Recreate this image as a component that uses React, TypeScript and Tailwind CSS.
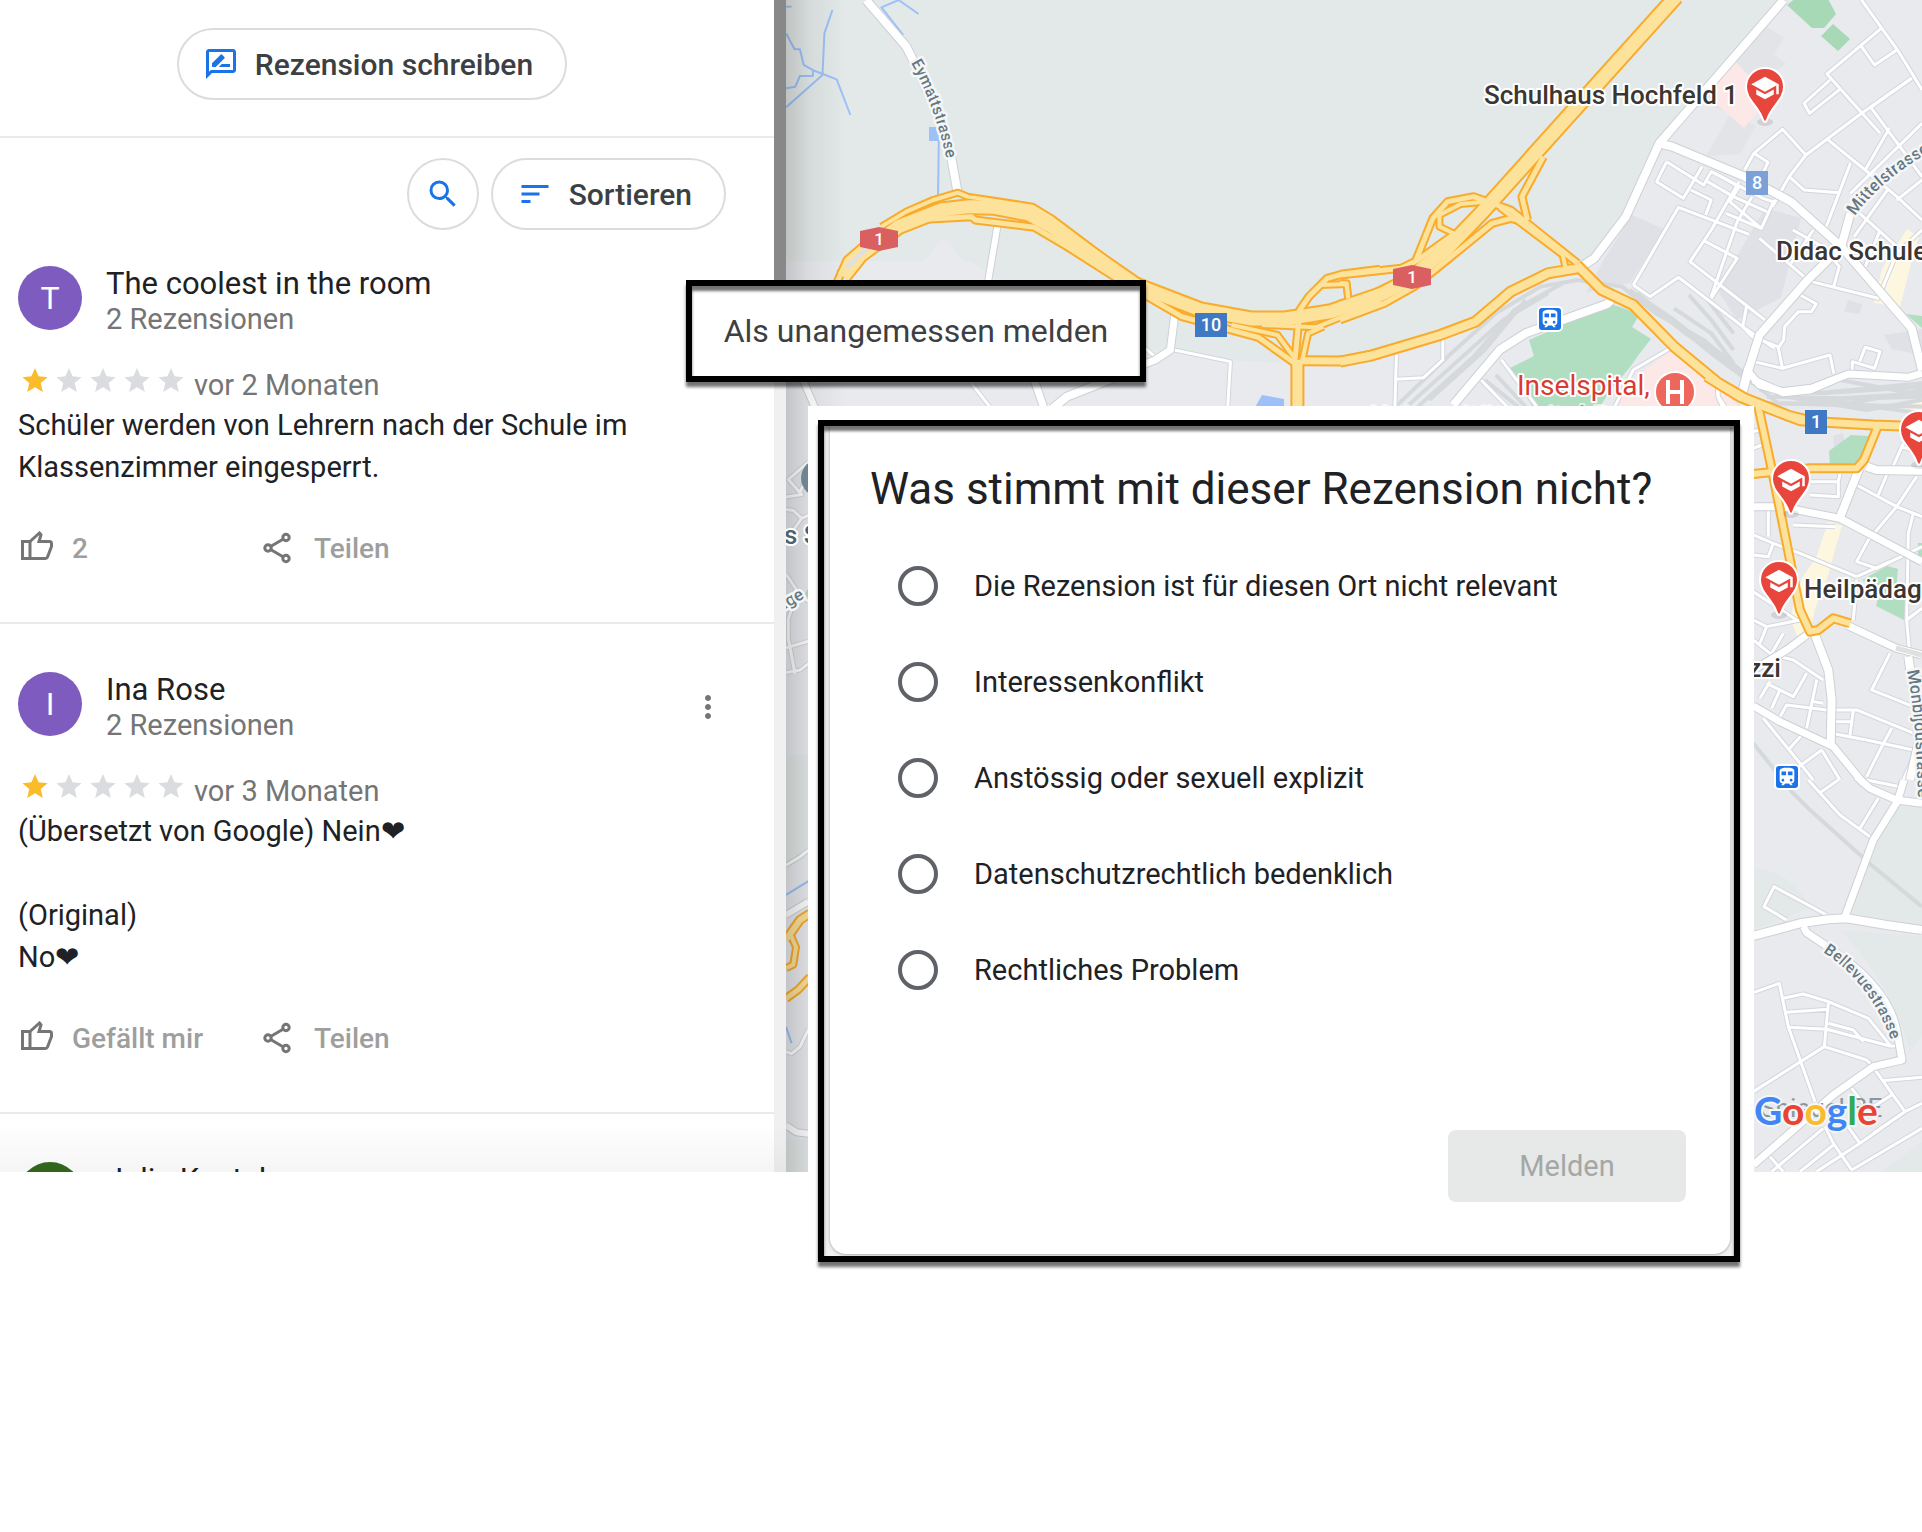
import { useState } from 'react';
import { MdMoreVert, MdOutlineRateReview, MdSchool, MdSearch, MdSort, MdTrain } from 'react-icons/md';

type Review = {
  author: string;
  initial: string;
  color: string;
  count?: string;
  rating?: number;
  age?: string;
  lines?: string[];
  likes?: string;
  menu?: boolean;
};

const REVIEWS: Review[] = [
  {
    author: 'The coolest in the room',
    initial: 'T',
    color: 'bg-[#7e5bbe]',
    count: '2 Rezensionen',
    rating: 1,
    age: 'vor 2 Monaten',
    lines: ['Schüler werden von Lehrern nach der Schule im', 'Klassenzimmer eingesperrt.'],
    likes: '2',
  },
  {
    author: 'Ina Rose',
    initial: 'I',
    color: 'bg-[#7e5bbe]',
    count: '2 Rezensionen',
    rating: 1,
    age: 'vor 3 Monaten',
    lines: ['(Übersetzt von Google) Nein❤', '', '(Original)', 'No❤'],
    likes: 'Gefällt mir',
    menu: true,
  },
  { author: 'Julia Kastel', initial: '', color: 'bg-[#33691e]' },
];

const REASONS = [
  'Die Rezension ist für diesen Ort nicht relevant',
  'Interessenkonflikt',
  'Anstössig oder sexuell explizit',
  'Datenschutzrechtlich bedenklich',
  'Rechtliches Problem',
];

function ThumbIcon() {
  return (
    <svg viewBox="0 3 36 36" className="size-9 shrink-0" fill="none" stroke="#757575" strokeWidth="3">
      <path d="M4.5 13.5H12v17H4.5z" />
      <path d="M12 13.5 21.5 5l1.5 1.8-2 6.7h10.5q2 0 2 2v3l-4 10.5q-.6 1.500-2 1.500H12" />
    </svg>
  );
}

function ShareIcon() {
  return (
    <svg viewBox="0 3 36 36" className="size-9 shrink-0" fill="none" stroke="#757575" strokeWidth="3">
      <circle cx="8" cy="20" r="3.200" />
      <circle cx="26" cy="9.500" r="3.200" />
      <circle cx="26" cy="30.500" r="3.200" />
      <path d="M11 18.300 23 11.200M11 21.700l12 7.100" />
    </svg>
  );
}

function Stars({ rating }: { rating: number }) {
  return (
    <div className="flex gap-2 pb-[10px] pl-1" role="img" aria-label={`${rating} von 5 Sternen`}>
      {[1, 2, 3, 4, 5].map((n) => (
        <svg
          key={n}
          viewBox="2 2 20 19"
          className={n <= rating ? 'h-6 w-[26px] fill-[#fbbc2c]' : 'h-6 w-[26px] fill-[#dadce0]'}
        >
          <path d="M12 17.270 18.180 21l-1.640-7.030L22 9.240l-7.190-.61L12 2 9.190 8.630 2 9.240l5.460 4.730L5.820 21z" />
        </svg>
      ))}
    </div>
  );
}

function ReviewItem({ review }: { review: Review }) {
  return (
    <article className="border-b-2 border-[#e8eaed] px-[18px] pt-12 pb-[54px]">
      <header className="flex">
        <div
          className={`flex size-16 items-center justify-center rounded-full text-[32px] leading-9 text-white ${review.color}`}
        >
          {review.initial}
        </div>
        <div className="ml-6">
          <h2 className="text-[31px] leading-9 text-[#202124]">{review.author}</h2>
          {review.count && <p className="text-[29px] leading-[34px] text-[#757575]">{review.count}</p>}
        </div>
        {review.menu && (
          <button type="button" aria-label="Weitere Aktionen" className="mr-[30px] ml-auto text-[#757575]">
            <MdMoreVert className="size-9" />
          </button>
        )}
      </header>
      {review.rating && (
        <div className="mt-[30px] flex h-[38px] items-center gap-[10px]">
          <Stars rating={review.rating} />
          <span className="text-[29px] leading-[34px] text-[#757575]">{review.age}</span>
        </div>
      )}
      {review.lines && (
        <div className="text-[29px] leading-[42px] text-[#202124]">
          {review.lines.map((line, i) => (
            <p key={i} className="min-h-[42px]">
              {line}
            </p>
          ))}
        </div>
      )}
      {review.likes && (
        <footer className="mt-[42px] flex text-[28px] leading-[38px] font-medium text-[#9e9e9e]">
          <button type="button" className="flex w-[242px] items-center gap-[18px]">
            <ThumbIcon />
            {review.likes}
          </button>
          <button type="button" className="flex items-center gap-[18px]">
            <ShareIcon />
            Teilen
          </button>
        </footer>
      )}
    </article>
  );
}

function ReviewPanel() {
  return (
    <section className="relative flex w-[786px] shrink-0 overflow-hidden">
      <div className="flex-1">
        <div className="flex h-[138px] justify-center border-b-2 border-[#e8eaed] pt-7 pr-[30px]">
          <button
            type="button"
            className="flex h-[72px] items-center gap-4 rounded-full border-2 border-[#dadce0] pr-8 pl-6 text-[30px] font-medium text-[#3c4043]"
          >
            <MdOutlineRateReview className="size-9 text-[#1a73e8]" />
            Rezension schreiben
          </button>
        </div>
        <div className="flex h-20 justify-end gap-3 pt-5 pr-12">
          <button
            type="button"
            aria-label="Rezensionen suchen"
            className="flex size-[72px] items-center justify-center rounded-full border-2 border-[#dadce0]"
          >
            <MdSearch className="size-9 text-[#1a73e8]" />
          </button>
          <button
            type="button"
            className="flex h-[72px] items-center gap-4 rounded-full border-2 border-[#dadce0] pr-8 pl-6 text-[30px] font-medium text-[#3c4043]"
          >
            <MdSort className="size-9 text-[#1a73e8]" />
            Sortieren
          </button>
        </div>
        {REVIEWS.map((review) => (
          <ReviewItem key={review.author} review={review} />
        ))}
      </div>
      <div className="w-3 bg-[#f0f0f0]">
        <div className="h-[330px] bg-[#888888]" />
      </div>
      <div className="pointer-events-none absolute inset-x-0 bottom-0 h-12 bg-linear-to-b from-transparent to-black/4" />
    </section>
  );
}

type Road = { d: string; w: number };

type Tile = {
  transform: string;
  water?: string[];
  rails?: string[];
  lanes?: string[];
  streets?: Road[];
  highways?: Road[];
};

const TILES: Tile[] = [
  {
    transform: 'matrix(.3827 0 0 .3333 780 0)',
    water: [
      'M16 20H30',
      'M137 30 116 100 111 225 16 322',
      'M16 100 38 148H52L62 195 85 210 148 238 184 345',
      'M86 212V228H52L40 260 16 265',
      'M362 42 310 0 265 22 322 105',
      'M415 420 413 585',
    ],
    lanes: ['M500 1150 548 1220', 'M1030 1050 1177 1085 1170 1220', 'M950 1040 985 1075'],
    streets: [
      { d: 'M225 0 330 140 352 190Q430 380 447 470L466 590', w: 8 },
      { d: 'M570 665 543 850', w: 6 },
      { d: 'M1032 940 1020 1050 980 1080 940 1098', w: 7 },
      { d: 'M60 1140 92 1225', w: 6 },
      { d: 'M664 1140 690 1225', w: 7 },
      { d: 'M870 1135 750 1190 712 1225', w: 8 },
    ],
    highways: [
      { d: 'M265 680 330 635 400 600 465 578 490 590 660 620 710 655 930 845', w: 4 },
      { d: 'M148 850 175 780 225 730', w: 5 },
      { d: 'M380 658 500 650 510 660 665 682 750 740 900 850 1050 950 1250 1012 1345 1090', w: 5 },
      { d: 'M1180 975 1300 1005 1345 1075', w: 4 },
      { d: 'M1260 975 1400 982 1568 905', w: 4 },
      { d: 'M1345 1090 1358 930 1382 890 1430 835 1470 822 1568 808', w: 5 },
      { d: 'M1365 1080 1380 1000 1420 980', w: 4 },
      { d: 'M1410 855 1480 852 1485 895', w: 4 },
      { d: 'M1360 1082 1475 1083 1568 1060', w: 7 },
      { d: 'M1352 1080V1240', w: 10 },
      {
        d: 'M165 830 210 765 310 680 420 630 495 620 560 622 650 642 710 680 930 855 1100 930 1230 957 1320 957 1440 935 1568 885',
        w: 13,
      },
    ],
  },
  {
    transform: 'matrix(.3712 0 0 .3333 1340 0)',
    rails: [
      'M150 1220 300 1060 420 940 540 860 640 840 760 860 850 940 980 1020 1100 1130 1240 1200 1568 1190',
      'M180 1220 330 1070 440 960 560 880',
      'M210 1220 360 1070 470 930 600 850',
      'M240 1200 390 1050 500 900',
      'M780 870 900 960 1060 1100 1180 1210 1568 1220',
      'M800 880 1000 1060 1110 1150',
      'M830 910 930 1000 1050 1080',
      'M900 925 1000 1000 1060 1090',
      'M940 885 1000 960 1060 1050',
      'M990 900 1060 1000',
      'M1130 1170 1300 1180 1568 1160',
      'M1150 1190 1350 1195 1568 1180',
      'M1150 1210 1400 1215 1568 1240',
      'M390 1140 480 1220',
      'M420 1125 500 1220',
    ],
    lanes: [
      'M790 855 912 622 1102 703',
      'M880 485 980 555 1000 515 1140 595 1165 605',
      'M880 485 853 545 925 595 975 500',
      'M945 570 1000 600 985 645',
      'M1075 545 1000 690 943 785 1145 960',
      'M1110 590 1070 665 1000 890',
      'M990 545 1060 590 1150 635',
      'M1050 605 1135 685 1170 600',
      'M1040 640 1135 685',
      'M980 722 1070 775 1000 895',
      'M1010 520 1075 560 1050 605',
      'M790 855 835 890 912 832 1085 980 1170 1045',
      'M1095 920 1085 980 1110 1010 1180 1040 1192 1105',
      'M1090 510 1115 460 1192 388 1255 465 1210 530 1165 620',
      'M1115 460 1153 487 1130 540',
      'M1255 465 1405 340 1540 235',
      'M1210 530 1250 570 1345 578',
      'M1405 0 1505 155 1568 270',
      'M1458 85 1312 222 1455 400',
      'M1405 140 1440 195 1500 150',
      'M1350 265 1265 340 1250 310 1320 240',
      'M1540 235 1430 322 1568 530',
      'M1568 370 1375 580',
      'M1480 385 1415 510',
      'M1315 420 1415 510 1500 590 1568 660',
      'M1375 490 1310 680',
      'M1400 640 1500 740',
      'M1475 570 1385 710',
      'M1455 690 1415 800',
      'M1130 715 1250 830',
      'M1220 690 1300 740 1345 800 1330 860',
      'M1275 690 1215 790',
      'M1270 845 1450 895 1500 760 1568 690',
      'M1240 885 1283 912 1270 935 1235 935 1198 980 1195 1020 1180 1045',
      'M1115 1085 1192 1105 1320 1065 1330 1120',
      'M1380 1110V1085L1440 1105 1455 1055 1415 1042 1400 1085',
      'M1500 600 1568 540',
      'M277 1015V1080L225 1133 150 1138 148 1220',
      'M152 1065 150 1138',
      'M435 1080 530 1220',
      'M890 1045 790 1110 740 1220',
      'M1018 1155V1190L1030 1220',
      'M380 1140 450 1220',
    ],
    streets: [
      { d: 'M1195 0 860 430 770 650 685 775 650 800', w: 8 },
      { d: 'M860 430 895 440 1090 530 1215 605 1350 740 1540 985 1568 1110', w: 8 },
      { d: 'M1375 640 1350 740 1260 840 1130 1005 1100 1110 1080 1200', w: 8 },
      { d: 'M1100 1115 1130 1155 1190 1175 1270 1165 1370 1122 1530 1132 1568 1120', w: 7 },
      { d: 'M740 890 720 912 500 1000 430 1050 305 1215', w: 8 },
    ],
    highways: [
      { d: 'M0 825 165 805 210 780 310 700', w: 5 },
      { d: 'M205 780 250 655 290 605 360 590 460 630 505 670 640 790', w: 5 },
      { d: 'M305 700 268 680V645L325 612 390 605', w: 4 },
      { d: 'M0 960 120 910 200 860 300 770 410 670 460 655 505 668', w: 5 },
      { d: 'M548 470 490 590 505 660', w: 5 },
      { d: 'M430 622 600 765 607 800', w: 4 },
      { d: 'M0 850H18L22 895', w: 4 },
      { d: 'M0 1085 80 1068 270 1005 365 965 460 875 560 820 640 805', w: 8 },
      { d: 'M905 -10 380 640 285 750 170 850 80 900 0 925', w: 13 },
      { d: 'M638 795 705 870 790 915 900 1040 1020 1150 1090 1195 1210 1248 1260 1262', w: 8 },
    ],
  },
  {
    transform: 'matrix(.3333 0 0 .3333 1700 380)',
    rails: ['M350 40 666 10', 'M300 60 450 70 666 30', 'M260 50 500 90 666 60', 'M420 0 666 45', 'M160 1090 240 1190'],
    lanes: [
      'M50 0 55 50 75 80',
      'M160 155 180 150M160 205 185 195',
      'M205 390V470',
      'M330 305 415 305 420 280M415 305V350L330 345',
      'M280 435 405 440',
      'M160 465 220 490 300 520 470 590',
      'M220 490 205 530 160 525',
      'M470 315 590 380 666 410',
      'M560 285 535 345M610 190 570 280M600 200 640 210',
      'M650 290 590 380 505 480 470 545 530 565 666 500',
      'M640 400 625 460 620 720 630 830',
      'M470 590 570 545M470 600 460 720M620 720 666 685',
      'M160 720 200 740 300 720M160 780 210 820 240 850M200 740 180 790M250 760 215 820',
      'M160 635 290 720',
      'M240 830 280 840 370 900M320 880 280 950 200 910M240 930 215 985M210 905 180 955',
      'M240 1010 260 975 380 990 470 990 666 1070',
      'M350 900 320 1045M460 990 450 1065M400 1025H460',
      'M395 1060 500 1080 640 1110M575 1045 540 1110 500 1190M340 965 370 970',
      'M570 820 515 930 640 980',
      'M190 1015 300 1150 340 1200M310 1060 265 1110M365 1110 290 1165M365 1110 420 1200M650 1110 610 1200',
    ],
    streets: [
      { d: 'M145 -40 120 55', w: 7 },
      { d: 'M160 0 250 38 330 30 400 0', w: 7 },
      { d: 'M500 260 530 270 666 272', w: 8 },
      { d: 'M160 380H240L420 415 666 545', w: 7 },
      { d: 'M478 265 420 412', w: 8 },
      { d: 'M345 765 385 870 395 960 392 1095', w: 8 },
      { d: 'M320 765 260 810 160 870', w: 7 },
      { d: 'M160 978 240 1025 400 1100 490 1210', w: 7 },
      { d: 'M440 735 590 805 666 825', w: 7 },
      { d: 'M625 830 650 1000 655 1090 630 1200', w: 8 },
    ],
    highways: [
      { d: 'M160 282 330 265 470 265 492 240 532 142', w: 6 },
      { d: 'M175 80 220 290 300 690 330 755 355 750 400 715 450 730', w: 6 },
      { d: 'M20 -10 120 52 300 122 520 135 666 140', w: 7 },
    ],
  },
  {
    transform: 'matrix(.3333 0 0 .3333 1700 780)',
    rails: ['M270 30 330 90 520 260 666 380'],
    lanes: [
      'M325 0 420 105 510 170M360 38 415 0M535 55 480 145M500 0 600 20',
      'M380 405 222 320 192 380 260 420',
      'M160 638 238 610 265 740 345 965',
      'M250 655 310 642 385 665 505 715 570 795M385 670 373 800 160 935M260 697 385 688M268 742 380 748 570 798 585 798M385 730 460 750 490 785',
      'M373 800 500 840 515 855M525 870 615 995 520 1060M545 902 666 892M575 945 520 980',
      'M455 925 490 970M666 970 615 995 480 1090 350 1175M440 1035 480 1090M666 1045 455 1170',
      'M375 1040 400 1090 455 1170M370 1045 215 1175M400 1095 300 1175M210 1130 250 1175',
    ],
    streets: [
      { d: 'M470 -10 510 25 590 60 666 70', w: 7 },
      { d: 'M612 0 592 65 520 180 435 410', w: 7 },
      { d: 'M160 468 300 430 385 418 440 415 560 435 666 450', w: 8 },
      { d: 'M310 440 320 458 375 495Q570 620 592 760L606 840 520 860 400 945 160 1155', w: 7 },
    ],
  },
  {
    transform: 'matrix(.3333 0 0 .4975 770 400)',
    water: ['M48 995 115 967', 'M48 1260 65 1293'],
    lanes: [
      'M115 125 55 160 95 190 48 195M90 185 115 150',
      'M48 220 70 222 95 238 115 232M95 238 70 262',
      'M48 350 83 385 115 405M83 385 55 440V480L75 550M48 498 115 485M48 548 90 543 115 530',
      'M48 1310 65 1314 90 1300 115 1265',
    ],
    streets: [
      { d: 'M48 935 90 918 115 905', w: 3 },
      { d: 'M48 1035 115 1008', w: 6 },
      { d: 'M48 1458 80 1472 115 1475', w: 6 },
    ],
    highways: [
      { d: 'M48 1085 90 1045 120 1032', w: 6 },
      { d: 'M62 1075 78 1100 70 1135 48 1142', w: 4 },
      { d: 'M48 1203 85 1185 120 1160', w: 5 },
    ],
  },
];

function RoadLayer({ kind, color, extra }: { kind: 'streets' | 'highways'; color: string; extra: number }) {
  return (
    <g stroke={color} strokeLinejoin="round">
      {TILES.map((tile) => (
        <g key={tile.transform} transform={tile.transform}>
          {(tile[kind] ?? []).map((road) => (
            <path key={road.d} d={road.d} strokeWidth={road.w + extra} vectorEffect="non-scaling-stroke" />
          ))}
        </g>
      ))}
    </g>
  );
}

function LineLayer({ kind, color, width }: { kind: 'water' | 'rails' | 'lanes'; color: string; width: number }) {
  return (
    <g stroke={color} strokeWidth={width} strokeLinejoin="round">
      {TILES.map((tile) => (
        <g key={tile.transform} transform={tile.transform}>
          {(tile[kind] ?? []).map((d) => (
            <path key={d} d={d} vectorEffect="non-scaling-stroke" />
          ))}
        </g>
      ))}
    </g>
  );
}

function Pin({ x, y }: { x: number; y: number }) {
  return (
    <g transform={`translate(${x} ${y})`}>
      <ellipse cx="0" cy="54" rx="8" ry="4" fill="#000" opacity=".1" />
      <path
        d="M0 0C11 0 19 8.500 19 19c0 13-13 19-17 33q-2 4-4 0C-6 38-19 32-19 19-19 8.500-11 0 0 0z"
        fill="#e8453c"
        stroke="#fff"
        strokeWidth="2"
      />
      <MdSchool x={-15} y={5} size={30} color="#fff" />
    </g>
  );
}

function Station({ x, y }: { x: number; y: number }) {
  return (
    <g transform={`translate(${x} ${y})`}>
      <rect x="-12" y="-12" width="24" height="24" rx="4" fill="#1a73e8" stroke="#fff" strokeWidth="2" />
      <MdTrain x={-11} y={-11} size={22} color="#fff" />
    </g>
  );
}

function Shield({ x, y, label, fill }: { x: number; y: number; label: string; fill: string }) {
  const half = label.length > 1 ? 16 : 11;
  return (
    <g transform={`translate(${x} ${y})`}>
      <rect x={-half} y="-12" width={half * 2} height="24" fill={fill} />
      <text y="6" textAnchor="middle" fontSize="18" fontWeight="500" fill="#fff">
        {label}
      </text>
    </g>
  );
}

function MotorwayShield({ x, y }: { x: number; y: number }) {
  return (
    <g transform={`translate(${x} ${y})`}>
      <path d="M-19-8 0-12 19-8V8L0 12-19 8z" fill="#da5f60" />
      <text y="6" textAnchor="middle" fontSize="17" fontWeight="500" fill="#fff">
        1
      </text>
    </g>
  );
}

function MapView() {
  return (
    <svg
      viewBox="786 0 1136 1172"
      preserveAspectRatio="xMinYMin slice"
      className="h-full w-full"
      fill="none"
      role="img"
      aria-label="Karte"
    >
      <defs>
        <linearGradient id="edge" x1="0" x2="1" y1="0" y2="0">
          <stop offset="0" stopColor="#000" stopOpacity=".16" />
          <stop offset=".4" stopColor="#000" stopOpacity=".06" />
          <stop offset="1" stopColor="#000" stopOpacity="0" />
        </linearGradient>
        <path id="eymatt" d="M911 63Q937 108 951 180" />
        <path id="mittel" d="M1855 216Q1880 180 1935 149" />
        <path id="monbijou" d="M1907 671Q1917 720 1918 810" />
        <path id="bellevue" d="M1823 952Q1876 986 1898 1060" />
        <path id="koeniz" d="M780 612 822 588" />
      </defs>

      <path d="M786 0h1136v1172H786z" fill="#e8eaee" />

      {/* woodland and open country */}
      <g fill="#e3e9e8">
        <path d="M786 0h1000l-127 145-34 72-35 48-16 4-60 24-38 32-136 40-100-4-150-20-120-80H786z" />
        <path d="m944 238 36 42h-74z" fill="#e8eaee" />
        <path d="M786 755h22v95l-22 22zM786 1140h22v32h-22z" />
        <path d="M1898 806h24v124l-78-6 26-80zM1840 930l82 6v100l-12 15q-20-70-70-121zM1754 868q40 4 56 40l-56 22zM1880 1172l42-30v30z" />
      </g>
      <g fill="#e0e1e6">
        <path d="m1766 26 18 12-10 16 12 10-44 30-36 62 34-2 16-28-60-28z" opacity=".7" />
        <path d="m1632 215 32 14-34 54-44 10 18-34zM1765 208l36 10-20 80-44 22-20-30z" />
        <path d="m1848 300 14 4-2 10-16-2zM1884 335l38-6v26l-30-6zM1833 436l10-3 2 12-11 2z" />
      </g>
      <g fill="#a8d9b7">
        <path d="m1787 5 10-8h30l9 17-12 14h-12zM1833 24l17 15-12 12-17-15z" />
      </g>
      <g fill="#b1ddc0">
        <path d="m1611 304 29 10-8 13 19 12-11 14-10 14-20 24-13 20h-62l-25-43 24-12-5-16z" />
        <path d="m1829 451 22-16 19 1-9 27-31 2zM1862 580l25-14 11 3-2 22 10 6-2 23-28-14 4-16zM1906 314l16 2v12zM1918 543h4v16h-4zM803 597h5v-8z" />
      </g>
      <g fill="#fce8e6">
        <path d="m1736 62 34 36-26 30-28-24-4-24zM1672 349l60 50 22 30v-18h-140l14-28z" />
      </g>
      <g fill="#fef7e0">
        <path d="m1907 229 12 8-5 14-14 56-26-4 8-34zM1828 522l14 4-6 20-8 30-12 30-6 24-12 8-8-20 12-40 14-20zM1900 404l22-4v12h-20z" />
      </g>
      <g fill="#9dc0f9">
        <path d="M929 127h10v14h-10zM1262 395l22 4v10h-30z" />
      </g>

      <LineLayer kind="water" color="#9dc0f9" width={2} />
      <LineLayer kind="rails" color="#d5d9dc" width={4} />
      <LineLayer kind="lanes" color="#d3d6db" width={5} />
      <LineLayer kind="lanes" color="#ffffff" width={3} />
      <RoadLayer kind="streets" color="#cdd0d5" extra={2} />
      <RoadLayer kind="streets" color="#ffffff" extra={0} />
      <RoadLayer kind="highways" color="#f9ab2b" extra={4} />
      <RoadLayer kind="highways" color="#fde29b" extra={0} />
      <path d="M846 268 878 238M1896 648 1922 655" stroke="#e0e0e0" strokeWidth="5" />

      <rect x="786" width="60" height="1172" fill="url(#edge)" />

      <MotorwayShield x={879} y={239} />
      <MotorwayShield x={1412} y={277} />
      <Shield x={1211} y={325} label="10" fill="#3f79c4" />
      <Shield x={1757} y={183} label="8" fill="#7ba1d8" />
      <Shield x={1816} y={422} label="1" fill="#3f79c4" />
      <Station x={1550} y={319} />
      <Station x={1787} y={777} />

      <g
        fontSize="17"
        fontWeight="500"
        fill="#67777f"
        stroke="#f4f6f7"
        strokeWidth="5"
        strokeLinejoin="round"
        paintOrder="stroke"
      >
        <text fontSize="16">
          <textPath href="#eymatt">Eymattstrasse</textPath>
        </text>
        <text>
          <textPath href="#mittel">Mittelstrasse</textPath>
        </text>
        <text>
          <textPath href="#monbijou">Monbijoustrasse</textPath>
        </text>
        <text fontSize="16">
          <textPath href="#bellevue">Bellevuestrasse</textPath>
        </text>
        <text>
          <textPath href="#koeniz">tige</textPath>
        </text>
      </g>

      <circle cx="820" cy="478" r="19" fill="#6d8591" />

      <g fontSize="26" fontWeight="500" stroke="#fff" strokeWidth="4" strokeLinejoin="round" paintOrder="stroke">
        <g fill="#3c3633">
          <text x="1484" y="104">
            Schulhaus Hochfeld 1
          </text>
          <text x="1776" y="260">
            Didac Schule
          </text>
          <text x="1804" y="598">
            Heilpädag
          </text>
          <text x="1781" y="677" textAnchor="end">
            zzi
          </text>
        </g>
        <g fill="#d93a33" fontSize="28" fontWeight="400">
          <text x="1370" y="426" opacity=".6">
            Universitätsspital Bern
          </text>
          <text x="1517" y="395">
            Inselspital,
          </text>
        </g>
        <text x="784" y="544" fill="#4b626c">
          s S
        </text>
      </g>

      <circle cx="1675" cy="392" r="20" fill="#ee675c" stroke="#fff" strokeWidth="2" />
      <path d="M1668 380v24M1682 380v24M1668 392h14" stroke="#fff" strokeWidth="4" />

      <Pin x={1765} y={68} />
      <Pin x={1919} y={411} />
      <Pin x={1791} y={460} />
      <Pin x={1779} y={561} />

      <text x="1760" y="1117" fontSize="26" fill="#8b979d">
        Spiegel BE
      </text>
      <text
        x="1754"
        y="1125"
        fontSize="39"
        fontWeight="700"
        fontFamily="Lato, sans-serif"
        stroke="#f4f6f7"
        strokeWidth="4"
        paintOrder="stroke"
      >
        <tspan fill="#4285f4">G</tspan>
        <tspan fill="#ea4335">o</tspan>
        <tspan fill="#fbbc2c">o</tspan>
        <tspan fill="#4285f4">g</tspan>
        <tspan fill="#34a853">l</tspan>
        <tspan fill="#ea4335">e</tspan>
      </text>
    </svg>
  );
}

function ReportDialog() {
  const [reason, setReason] = useState<string | null>(null);

  return (
    <div className="absolute top-[406px] left-[808px] w-[946px] bg-white pt-[14px] pr-[14px] pb-5 pl-[10px]">
      <div className="relative border-[6px] border-black bg-[#f0f0f0] pr-1 pl-[6px] shadow-[0_5px_3px_rgba(0,0,0,0.55)]">
        <form
          role="dialog"
          aria-labelledby="report-title"
          onSubmit={(e) => e.preventDefault()}
          className="mb-[2px] flex flex-col rounded-b-2xl bg-white pt-[35px] pr-11 pb-[52px] pl-10 shadow-[0_1px_3px_rgba(60,64,67,0.4)]"
        >
          <h1 id="report-title" className="text-[44px] leading-[56px] text-[#202124]">
            Was stimmt mit dieser Rezension nicht?
          </h1>
          <fieldset className="mt-[21px] pl-7">
            {REASONS.map((label) => (
              <label key={label} className="flex h-24 items-center gap-9 text-[29px] leading-9 text-[#202124]">
                <input
                  type="radio"
                  name="reason"
                  checked={reason === label}
                  onChange={() => setReason(label)}
                  className="size-10 appearance-none rounded-full border-4 border-[#5f6368] checked:bg-[#1a73e8]"
                />
                {label}
              </label>
            ))}
          </fieldset>
          <button
            type="submit"
            disabled={!reason}
            className="mt-28 h-[72px] w-[238px] self-end rounded-lg bg-[#e7e9e8] text-[29px] leading-9 text-[#a5a6a6]"
          >
            Melden
          </button>
        </form>
        <div className="pointer-events-none absolute inset-0 shadow-[inset_0_5px_3px_rgba(0,0,0,0.55)]" />
      </div>
    </div>
  );
}

export default function App() {
  return (
    <div className="relative min-h-screen overflow-hidden bg-white font-['Roboto',sans-serif]">
      <main className="flex h-[1172px]">
        <ReviewPanel />
        <div className="min-w-0 flex-1 overflow-hidden">
          <MapView />
        </div>
      </main>
      <button
        type="button"
        className="absolute top-[280px] left-[686px] h-[102px] w-[460px] border-[6px] border-black bg-white text-[32px] text-[#3c4043] shadow-[0_5px_3px_rgba(0,0,0,0.55),inset_0_5px_3px_rgba(0,0,0,0.55)]"
      >
        Als unangemessen melden
      </button>
      <ReportDialog />
    </div>
  );
}
